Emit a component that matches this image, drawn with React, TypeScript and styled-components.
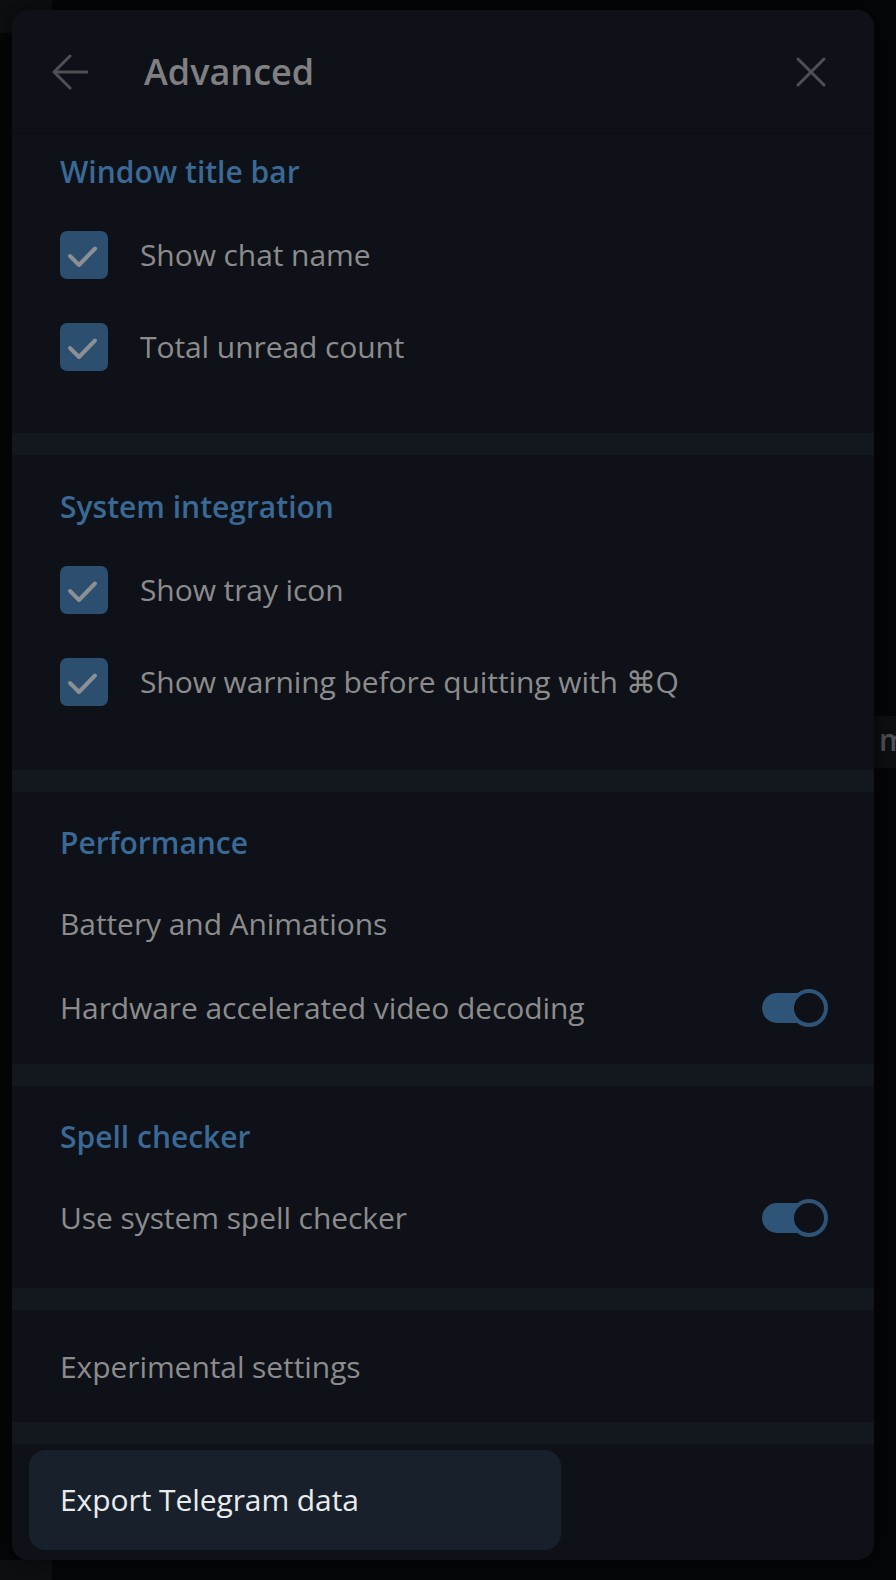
import React from 'react';
import styled, { createGlobalStyle } from 'styled-components';

const GlobalStyle = createGlobalStyle`
  html, body { margin: 0; padding: 0; background: #050609; }
  body {
    font-family: "Open Sans", "Noto Sans", sans-serif;
    width: 896px;
    height: 1580px;
    overflow: hidden;
    -webkit-font-smoothing: antialiased;
  }
  #root { width: 896px; height: 1580px; }
`;

const Page = styled.div`
  position: relative;
  width: 896px;
  height: 1580px;
  display: grid;
  grid-template-columns: 52px 1fr 22px;
  background: #050609;
`;

const SideColumn = styled.div`
  display: flex;
  flex-direction: column;
  justify-content: space-between;
`;

const SideBlock = styled.div<{ $h: number }>`
  height: ${(p) => p.$h}px;
  background: #0d0f12;
`;

const RightColumn = styled.div`
  padding-top: 716px;
  overflow: hidden;
`;

const PeekChip = styled.div`
  height: 52px;
  background: #0d0f12;
  color: #505257;
  font-size: 30px;
  font-weight: 600;
  line-height: 48px;
  padding-left: 5px;
  overflow: hidden;
  white-space: nowrap;
`;

const Modal = styled.div`
  position: absolute;
  left: 12px;
  top: 10px;
  width: 862px;
  height: 1550px;
  background: #0e1117;
  border-radius: 16px;
  overflow: hidden;
  display: flex;
  flex-direction: column;
  box-shadow: 0 0 24px rgba(0, 0, 0, 0.6);
`;

const Header = styled.header`
  height: 124px;
  flex: none;
  box-sizing: border-box;
  display: flex;
  align-items: center;
  padding: 0 48px 0 40px;
  border-bottom: 1px solid #0a0c10;
`;

const IconButton = styled.span<{ $size: number }>`
  width: ${(p) => p.$size}px;
  height: ${(p) => p.$size}px;
  display: flex;
  align-items: center;
  justify-content: center;
  flex: none;
  color: #4d5055;
`;

const Title = styled.h1`
  flex: 1;
  margin: 0 0 0 56px;
  font-size: 36px;
  font-weight: 600;
  line-height: 44px;
  color: #808080;
`;

const Content = styled.div`
  flex: 1;
  display: flex;
  flex-direction: column;
`;

const Section = styled.section<{ $top: number; $bottom: number }>`
  display: flex;
  flex-direction: column;
  padding: ${(p) => p.$top}px 0 ${(p) => p.$bottom}px;
  flex: none;
`;

const Band = styled.div`
  height: 22px;
  flex: none;
  background: #13181e;
`;

const SectionTitle = styled.div<{ $gap: number }>`
  padding: 0 48px;
  height: 36px;
  line-height: 36px;
  font-size: 30px;
  font-weight: 600;
  color: #3a6995;
  margin-bottom: ${(p) => p.$gap}px;
`;

const CheckRow = styled.div`
  height: 92px;
  display: flex;
  align-items: center;
  gap: 32px;
  padding: 0 48px;
  font-size: 30px;
  line-height: 36px;
  letter-spacing: -0.08px;
  color: #8c8c8c;
`;

const CheckBox = styled.span`
  width: 48px;
  height: 48px;
  border-radius: 7px;
  background: #2c4e6f;
  display: flex;
  align-items: center;
  justify-content: center;
  flex: none;
`;

const PlainRow = styled.div`
  height: 84px;
  display: flex;
  align-items: center;
  justify-content: space-between;
  padding: 0 46px 0 48px;
  font-size: 30px;
  line-height: 36px;
  letter-spacing: -0.08px;
  color: #8c8c8c;
`;

const Toggle = styled.span`
  position: relative;
  display: block;
  width: 66px;
  height: 38px;
  flex: none;
`;

const Track = styled.span`
  position: absolute;
  left: 0;
  top: 4px;
  width: 58px;
  height: 30px;
  border-radius: 15px;
  background: #2e5477;
`;

const Knob = styled.span`
  position: absolute;
  right: 0;
  top: 0;
  width: 38px;
  height: 38px;
  box-sizing: border-box;
  border-radius: 50%;
  border: 4px solid #2e5477;
  background: #0e1117;
`;

const ExportButton = styled.div`
  height: 100px;
  width: 532px;
  margin-left: 17px;
  box-sizing: border-box;
  border-radius: 16px;
  background: #18212b;
  display: flex;
  align-items: center;
  padding-left: 31px;
  font-size: 30px;
  line-height: 36px;
  letter-spacing: -0.08px;
  color: #e9ebed;
`;

const BackIcon = () => (
  <svg width="36" height="36" viewBox="0 0 36 36" fill="none">
    <path d="M2 18 H35 M2 18 L18 2 M2 18 L18 34" stroke="currentColor" strokeWidth="3" strokeLinecap="round" strokeLinejoin="round" />
  </svg>
);

const CloseIcon = () => (
  <svg width="30" height="30" viewBox="0 0 30 30" fill="none">
    <path d="M2 2 L28 28 M28 2 L2 28" stroke="currentColor" strokeWidth="3" strokeLinecap="round" />
  </svg>
);

const CheckMark = () => (
  <svg width="48" height="48" viewBox="0 0 48 48" fill="none">
    <path d="M10 25 L19 34 L35 17.5" stroke="#8b9095" strokeWidth="4" strokeLinecap="round" strokeLinejoin="round" />
  </svg>
);

const Check = ({ label }: { label: string }) => (
  <CheckRow>
    <CheckBox>
      <CheckMark />
    </CheckBox>
    <span>{label}</span>
  </CheckRow>
);

const Switch = () => (
  <Toggle>
    <Track />
    <Knob />
  </Toggle>
);

export default function App() {
  return (
    <>
      <GlobalStyle />
      <Page>
        <SideColumn>
          <SideBlock $h={33} />
          <SideBlock $h={20} />
        </SideColumn>
        <div />
        <RightColumn>
          <PeekChip>m</PeekChip>
        </RightColumn>

        <Modal>
          <Header>
            <IconButton $size={36}>
              <BackIcon />
            </IconButton>
            <Title>Advanced</Title>
            <IconButton $size={30}>
              <CloseIcon />
            </IconButton>
          </Header>
          <Content>
            <Section $top={20} $bottom={40}>
              <SectionTitle $gap={19}>Window title bar</SectionTitle>
              <Check label="Show chat name" />
              <Check label="Total unread count" />
            </Section>
            <Band />
            <Section $top={34} $bottom={42}>
              <SectionTitle $gap={19}>System integration</SectionTitle>
              <Check label="Show tray icon" />
              <Check label="Show warning before quitting with ⌘Q" />
            </Section>
            <Band />
            <Section $top={33} $bottom={14}>
              <SectionTitle $gap={21}>Performance</SectionTitle>
              <PlainRow>Battery and Animations</PlainRow>
              <PlainRow>
                <span>Hardware accelerated video decoding</span>
                <Switch />
              </PlainRow>
            </Section>
            <Band />
            <Section $top={33} $bottom={28}>
              <SectionTitle $gap={21}>Spell checker</SectionTitle>
              <PlainRow>
                <span>Use system spell checker</span>
                <Switch />
              </PlainRow>
            </Section>
            <Band />
            <Section $top={15} $bottom={13}>
              <PlainRow>Experimental settings</PlainRow>
            </Section>
            <Band />
            <Section $top={6} $bottom={10}>
              <ExportButton>Export Telegram data</ExportButton>
            </Section>
          </Content>
        </Modal>
      </Page>
    </>
  );
}
